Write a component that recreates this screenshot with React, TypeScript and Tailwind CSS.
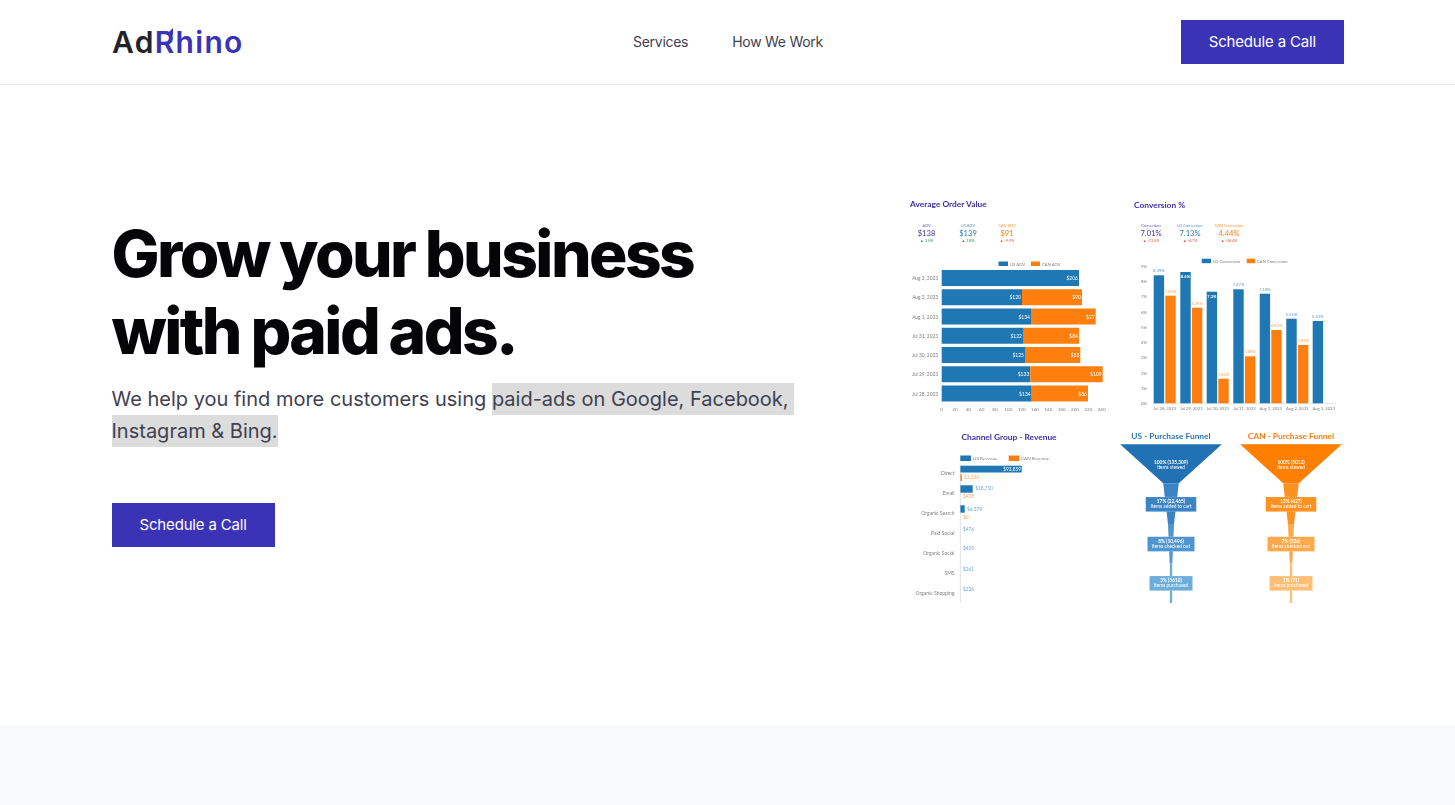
const blue = '#1f77b4';
const orange = '#ff7f0e';
const indigo = '#3f2fa8';
const grey = '#7f7f7f';

const aovRows = [
  { date: 'Aug 3, 2023', us: 1079, can: 0, usLabel: '$206', canLabel: '' },
  { date: 'Aug 2, 2023', us: 1022, can: 1082, usLabel: '$120', canLabel: '$90' },
  { date: 'Aug 1, 2023', us: 1031, can: 1095.7, usLabel: '$134', canLabel: '$97' },
  { date: 'Jul 31, 2023', us: 1023, can: 1079, usLabel: '$122', canLabel: '$84' },
  { date: 'Jul 30, 2023', us: 1025, can: 1080.3, usLabel: '$125', canLabel: '$83' },
  { date: 'Jul 29, 2023', us: 1030.3, can: 1102.7, usLabel: '$133', canLabel: '$109' },
  { date: 'Jul 28, 2023', us: 1031.7, can: 1088, usLabel: '$134', canLabel: '$86' },
];

const conversionBars = [
  { date: 'Jul 28, 2023', x: 1153.7, usTop: 275.3, canTop: 295.7, usLabel: '8.39%', canLabel: '7.00%' },
  { date: 'Jul 29, 2023', x: 1180.3, usTop: 272, canTop: 307.7, usLabel: '8.6%', canLabel: '6.25%' },
  { date: 'Jul 30, 2023', x: 1206.7, usTop: 291.7, canTop: 378.7, usLabel: '7.3%', canLabel: '1.60%' },
  { date: 'Jul 31, 2023', x: 1233.3, usTop: 289.3, canTop: 356.3, usLabel: '7.47%', canLabel: '3.08%' },
  { date: 'Aug 1, 2023', x: 1259.7, usTop: 293.7, canTop: 330, usLabel: '7.18%', canLabel: '4.82%' },
  { date: 'Aug 2, 2023', x: 1286.3, usTop: 318.7, canTop: 345, usLabel: '5.55%', canLabel: '3.83%' },
  { date: 'Aug 3, 2023', x: 1312.7, usTop: 321, canTop: 0, usLabel: '5.41%', canLabel: '' },
];

const channelRows = [
  { name: 'Direct', y: 473.3 },
  { name: 'Email', y: 493.3 },
  { name: 'Organic Search', y: 513.7 },
  { name: 'Paid Social', y: 533.3 },
  { name: 'Organic Social', y: 553.3 },
  { name: 'SMS', y: 573 },
  { name: 'Organic Shopping', y: 593.7 },
];

function Kpi({ x, label, value, delta, color, deltaColor }: { x: number; label: string; value: string; delta: string; color: string; deltaColor: string }) {
  return (
    <g textAnchor="middle">
      <text x={x} y={227} fontSize={3.9} fill={color} opacity={0.8}>{label}</text>
      <text x={x} y={236} fontSize={7.6} fill={color}>{value}</text>
      <text x={x} y={242} fontSize={3.8} fill={deltaColor}>{delta}</text>
    </g>
  );
}

function AovChart() {
  return (
    <g>
      <text x={910} y={207} fontSize={8.4} fontWeight={700} fill={indigo}>Average Order Value</text>
      <Kpi x={926.5} label="AOV" value="$138" delta="▲ 3.5%" color={indigo} deltaColor="#2e8b57" />
      <Kpi x={968} label="US AOV" value="$139" delta="▲ 3.8%" color="#2e75b5" deltaColor="#2e8b57" />
      <Kpi x={1007} label="CAN AOV" value="$91" delta="▲ -9.9%" color={orange} deltaColor="#e0524d" />

      <rect x={998.5} y={261.5} width={9.5} height={4.5} fill={blue} />
      <text x={1010} y={265.5} fontSize={4.2} fill={grey}>US AOV</text>
      <rect x={1031} y={261.5} width={9} height={4.5} fill={orange} />
      <text x={1042} y={265.5} fontSize={4.2} fill={grey}>CAN AOV</text>

      {aovRows.map((row, i) => {
        const top = 270 + i * 19.25;
        return (
          <g key={row.date}>
            <text x={938} y={top + 10} fontSize={4.8} fill={grey} textAnchor="end">{row.date}</text>
            <rect x={941.7} y={top} width={row.us - 941.7} height={16} fill={blue} />
            <text x={row.us - 1} y={top + 10} fontSize={5} fill="#fff" textAnchor="end">{row.usLabel}</text>
            {row.can > 0 && (
              <>
                <rect x={row.us} y={top} width={row.can - row.us} height={16} fill={orange} />
                <text x={row.can - 1} y={top + 10} fontSize={5} fill="#fff" textAnchor="end">{row.canLabel}</text>
              </>
            )}
          </g>
        );
      })}

      {Array.from({ length: 13 }).map((_, i) => (
        <text key={i} x={941.7 + i * 13.33} y={411} fontSize={4.6} fill={grey} textAnchor="middle">{i * 20}</text>
      ))}
    </g>
  );
}

function ConversionChart() {
  return (
    <g>
      <text x={1134} y={207.5} fontSize={8.4} fontWeight={700} fill={indigo}>Conversion %</text>
      <Kpi x={1151} label="Conversion" value="7.01%" delta="▲ -11.5%" color={indigo} deltaColor="#e0524d" />
      <Kpi x={1190} label="US Conversion" value="7.13%" delta="▲ -4.7%" color="#2e75b5" deltaColor="#e0524d" />
      <Kpi x={1229} label="CAN Conversion" value="4.44%" delta="▲ -36.4%" color={orange} deltaColor="#e0524d" />

      <rect x={1201.7} y={258.7} width={9.3} height={4.5} fill={blue} />
      <text x={1213} y={262.7} fontSize={4.2} fill={grey}>US Conversion</text>
      <rect x={1246.7} y={258.7} width={8.5} height={4.5} fill={orange} />
      <text x={1257} y={262.7} fontSize={4.2} fill={grey}>CAN Conversion</text>

      {Array.from({ length: 10 }).map((_, i) => (
        <text key={i} x={1147} y={405 - i * 15.25} fontSize={4.4} fill={grey} textAnchor="end">{i}%</text>
      ))}
      <line x1={1152} y1={403.5} x2={1336.5} y2={403.5} stroke="#d9d9d9" strokeWidth={0.6} />

      {conversionBars.map((bar, i) => (
        <g key={bar.date} fontSize={4.2} textAnchor="middle">
          <rect x={bar.x} y={bar.usTop} width={10.4} height={403.3 - bar.usTop} fill={blue} />
          {i === 1 || i === 2 ? (
            <text x={bar.x + 5.2} y={bar.usTop + 6} fill="#fff" fontWeight={700}>{bar.usLabel}</text>
          ) : (
            <text x={bar.x + 5.2} y={bar.usTop - 3} fill="#5b9bd0">{bar.usLabel}</text>
          )}
          {bar.canTop > 0 && (
            <>
              <rect x={bar.x + 11.6} y={bar.canTop} width={10.4} height={403.3 - bar.canTop} fill={orange} />
              <text x={bar.x + 16.8} y={bar.canTop - 3} fill="#f9a65a">{bar.canLabel}</text>
            </>
          )}
          <text x={bar.x + 11} y={410} fill={grey} fontSize={4.2}>{bar.date}</text>
        </g>
      ))}
    </g>
  );
}

function ChannelChart() {
  return (
    <g>
      <text x={1009} y={439.5} fontSize={8.4} fontWeight={700} fill={indigo} textAnchor="middle">Channel Group - Revenue</text>
      <rect x={960.3} y={455.5} width={10.7} height={5.5} fill={blue} />
      <text x={973} y={460} fontSize={4.6} fill={grey}>US Revenue</text>
      <rect x={1008.7} y={455.5} width={10.6} height={5.5} fill={orange} />
      <text x={1021} y={460} fontSize={4.6} fill={grey}>CAN Revenue</text>

      {channelRows.map((row) => (
        <text key={row.name} x={954.5} y={row.y + 1.6} fontSize={5} fill={grey} textAnchor="end">{row.name}</text>
      ))}
      <line x1={960.4} y1={465} x2={960.4} y2={603} stroke="#c9d3dc" strokeWidth={0.6} />

      <rect x={960.4} y={465.7} width={61.3} height={6.8} fill={blue} />
      <text x={1021} y={470.8} fontSize={4.8} fill="#fff" textAnchor="end">$93,859</text>
      <rect x={960.4} y={474.3} width={1.4} height={6.7} fill={orange} />
      <rect x={960.4} y={485.3} width={12.3} height={7.4} fill={blue} />
      <rect x={960.4} y={505.3} width={4.3} height={7.4} fill={blue} />

      <g fontSize={4.8} fill="#f9a65a">
        <text x={964} y={479.2}>$2,134</text>
        <text x={963} y={498.3}>$428</text>
        <text x={963} y={518.6}>$0</text>
      </g>
      <g fontSize={4.8} fill="#6ea6d6">
        <text x={975.3} y={490.4}>$18,710</text>
        <text x={967} y={510.6}>$6,379</text>
        <text x={963} y={531}>$476</text>
        <text x={963} y={550.4}>$429</text>
        <text x={963} y={570.6}>$261</text>
        <text x={963} y={591}>$236</text>
      </g>
    </g>
  );
}

type FunnelProps = {
  cx: number;
  title: string;
  shades: string[];
  titleColor: string;
  labels: string[][];
};

function Funnel({ cx, title, shades, titleColor, labels }: FunnelProps) {
  const boxes = [
    { half: 25.3, top: 497, fill: shades[1] },
    { half: 23.6, top: 536.7, fill: shades[2] },
    { half: 21.6, top: 576, fill: shades[3] },
  ];
  return (
    <g textAnchor="middle">
      <text x={cx} y={438.7} fontSize={8.4} fontWeight={700} fill={titleColor}>{title}</text>
      <polygon points={`${cx - 50.9},444.3 ${cx + 50.9},444.3 ${cx + 7.8},483.3 ${cx - 7.8},483.3`} fill={shades[0]} />
      <polygon points={`${cx - 7.8},483.3 ${cx + 7.8},483.3 ${cx + 3},524 ${cx - 3},524`} fill={shades[1]} />
      <polygon points={`${cx - 3},524 ${cx + 3},524 ${cx + 1.3},563.5 ${cx - 1.3},563.5`} fill={shades[2]} />
      <polygon points={`${cx - 1.2},563.5 ${cx + 1.2},563.5 ${cx + 1.1},603 ${cx - 1.1},603`} fill={shades[3]} />
      <text x={cx} y={463.5} fontSize={4.8} fill="#fff" fontWeight={700}>{labels[0][0]}</text>
      <text x={cx} y={468.8} fontSize={4.8} fill="#fff">{labels[0][1]}</text>
      {boxes.map((box, i) => (
        <g key={box.top}>
          <rect x={cx - box.half} y={box.top} width={box.half * 2} height={14.7} fill={box.fill} stroke="#fff" strokeOpacity={0.35} strokeWidth={0.5} />
          <text x={cx} y={box.top + 6} fontSize={4.8} fill="#fff" fontWeight={700}>{labels[i + 1][0]}</text>
          <text x={cx} y={box.top + 11.3} fontSize={4.8} fill="#fff">{labels[i + 1][1]}</text>
        </g>
      ))}
    </g>
  );
}

function Dashboard() {
  return (
    <svg viewBox="900 190 444 430" className="w-[444px] h-[430px] shrink-0 blur-[0.5px] [font-family:Lato,sans-serif]">
      <AovChart />
      <ConversionChart />
      <ChannelChart />
      <Funnel
        cx={1171}
        title="US - Purchase Funnel"
        titleColor="#2e75b5"
        shades={['#2171b5', '#3a83c4', '#4f95cf', '#6cadda']}
        labels={[['100% (135,309)', 'Items viewed'], ['17% (22,465)', 'Items added to cart'], ['8% (10,496)', 'Items checked out'], ['3% (3610)', 'Items purchased']]}
      />
      <Funnel
        cx={1291}
        title="CAN - Purchase Funnel"
        titleColor={orange}
        shades={['#ff8000', '#ff9120', '#ffa94d', '#ffbe73']}
        labels={[['100% (5012)', 'Items viewed'], ['13% (627)', 'Items added to cart'], ['7% (326)', 'Items checked out'], ['1% (71)', 'Items purchased']]}
      />
    </svg>
  );
}

function Logo() {
  return (
    <a href="#" className="flex items-center text-[30px] leading-none font-semibold tracking-[1.3px] [font-family:Inter,sans-serif]">
      <span className="text-[#222228]">Ad</span>
      <span className="relative text-[#3b33b5]">
        R
        <svg viewBox="0 0 6 6" className="absolute left-[11px] top-[1px] w-[7px] h-[7px]" fill="#3b33b5">
          <path d="M0 6 L6 0 L6 6 Z" />
        </svg>
      </span>
      <span className="text-[#3b33b5]">hino</span>
    </a>
  );
}

function CallButton() {
  return (
    <a href="#" className="flex items-center justify-center h-11 px-7 bg-[#3b33b5] text-white text-[15px] tracking-[-0.011em] [font-family:Inter,sans-serif]">
      Schedule a Call
    </a>
  );
}

export default function App() {
  return (
    <div className="min-h-[805px] bg-white [font-family:Inter,sans-serif]">
      <header className="h-[85px] border-b border-[#e8e8ea]">
        <div className="ml-28 grid grid-cols-3 items-center h-full w-[1232px]">
          <div className="justify-self-start">
            <Logo />
          </div>
          <nav className="flex justify-center gap-11 text-sm tracking-[-0.02em] text-[#3f4150]">
            <a href="#">Services</a>
            <a href="#">How We Work</a>
          </nav>
          <div className="justify-self-end">
            <CallButton />
          </div>
        </div>
      </header>

      <main className="h-[640px] flex items-center">
        <div className="ml-[111.5px] flex items-center justify-between w-[1232.5px]">
          <div className="flex flex-col items-start pb-12">
            <h1 className="text-[64px] leading-[77px] font-extrabold tracking-[-0.04em] [word-spacing:-1px] text-[#050507]">
              Grow your business
              <br />
              with paid ads.
            </h1>
            <p className="mt-[14px] text-xl leading-8 text-[#3f4150]">
              We help you find more customers using{' '}
              <span className="bg-[#dcdcdc] py-1 pr-[5px]">paid-ads on Google, Facebook,</span>
              <br />
              <span className="bg-[#dcdcdc] py-1">Instagram &amp; Bing.</span>
            </p>
            <div className="mt-14">
              <CallButton />
            </div>
          </div>
          <Dashboard />
        </div>
      </main>

      <div className="h-20 bg-[#f8f9fb]" />
    </div>
  );
}
